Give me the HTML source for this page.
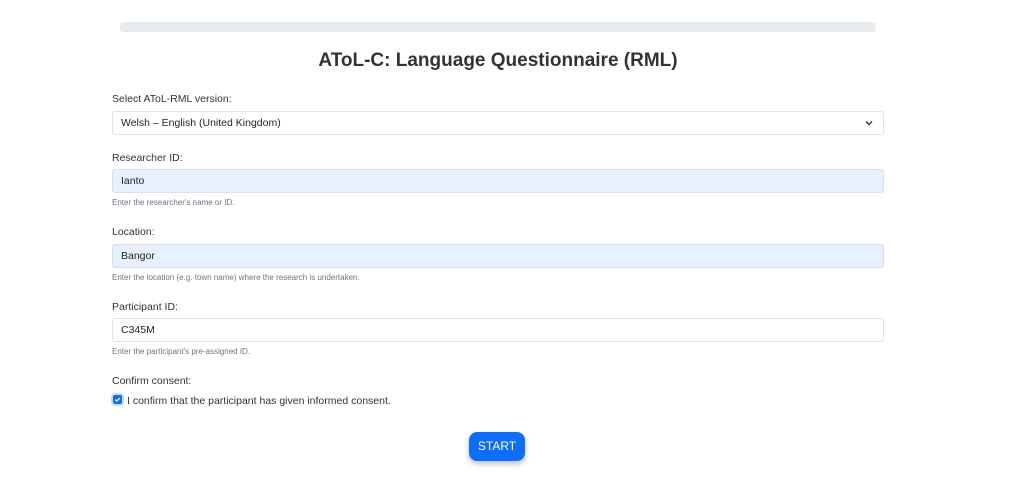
<!DOCTYPE html>
<html><head><style>
body{margin:0;width:1030px;height:490px;background:#fff;font-family:"Liberation Sans",sans-serif;color:#212529;position:relative;overflow:hidden}
.a{position:absolute}
.bar{left:120px;top:22px;width:756px;height:10px;background:#e9ecef;border-radius:3px}
h1{position:absolute;left:0;width:996px;top:50px;margin:0;text-align:center;font-size:19px;font-weight:bold;color:#333}
.l{left:112px;font-size:10.5px;color:#333}
.f{left:112px;height:22px;border:1px solid #dee2e6;border-radius:3px;font-size:10.5px;line-height:22px;padding-left:8px;box-sizing:content-box;width:762px}
.fill{background:#e8f0fe;border-color:#d6e0f5}
.h{left:112px;font-size:8px;color:#6c757d}
.btn{left:469px;top:432px;width:56px;height:29px;background:#0d6efd;color:#fff;border-radius:8px;font-size:12px;text-align:center;line-height:29px;box-shadow:0 3px 6px rgba(0,0,0,.25)}
</style></head><body>
<div class="a bar"></div>
<h1>AToL-C: Language Questionnaire (RML)</h1>
<div class="a l" style="top:93px">Select AToL-RML version:</div>
<div class="a f" style="top:111px">Welsh – English (United Kingdom)<svg class="a" style="right:10px;top:8px" width="8" height="6" viewBox="0 0 8 6"><path d="M1 1.5L4 4.5L7 1.5" fill="none" stroke="#333" stroke-width="1.4"/></svg></div>
<div class="a l" style="top:152px">Researcher ID:</div>
<div class="a f fill" style="top:169px">Ianto</div>
<div class="a h" style="top:198px">Enter the researcher's name or ID.</div>
<div class="a l" style="top:226px">Location:</div>
<div class="a f fill" style="top:244px">Bangor</div>
<div class="a h" style="top:273px">Enter the location (e.g. town name) where the research is undertaken.</div>
<div class="a l" style="top:301px">Participant ID:</div>
<div class="a f" style="top:318px">C345M</div>
<div class="a h" style="top:347px">Enter the participant's pre-assigned ID.</div>
<div class="a l" style="top:375px">Confirm consent:</div>
<div class="a" style="left:113px;top:395px;width:9px;height:9px;background:#0d6efd;border-radius:2px;box-shadow:0 0 0 2px #c7dbfd"><svg width="9" height="9" viewBox="0 0 9 9" style="display:block"><path d="M2.2 4.6L3.8 6.1L6.8 3" fill="none" stroke="#fff" stroke-width="1.3"/></svg></div>
<div class="a l" style="left:127px;top:395px">I confirm that the participant has given informed consent.</div>
<div class="a btn">START</div>
</body></html>
